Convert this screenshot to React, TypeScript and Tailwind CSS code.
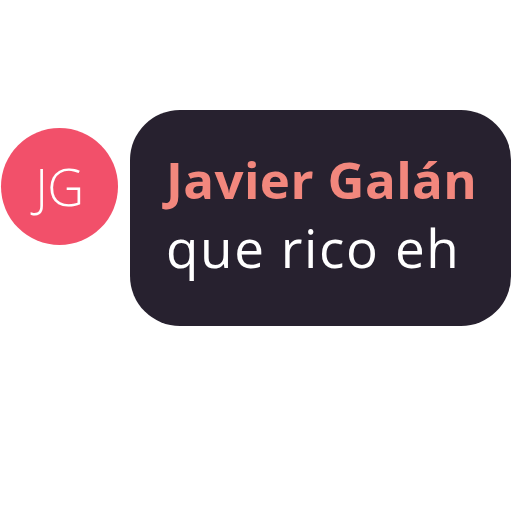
export default function App() {
  return (
    <div className="w-[512px] h-[512px] bg-white pt-[110px] pl-[1px] flex items-start gap-[12px]" style={{ fontFamily: '"Open Sans", sans-serif' }}>
      <div className="mt-[18px] w-[117px] h-[117px] rounded-full bg-[#f2506a] flex items-center justify-center shrink-0">
        <span className="text-[51px] font-light text-white leading-none tracking-[-0.5px]">JG</span>
      </div>
      <div className="w-[381px] h-[216px] rounded-[50px] bg-[#27212f] pl-[36px] pt-[35px]">
        <div className="text-[51px] leading-[68px] font-bold text-[#f2877d] tracking-[0.4px]">Javier Galán</div>
        <div className="text-[53px] leading-[70px] text-white tracking-[1.6px]">que rico eh</div>
      </div>
    </div>
  );
}
